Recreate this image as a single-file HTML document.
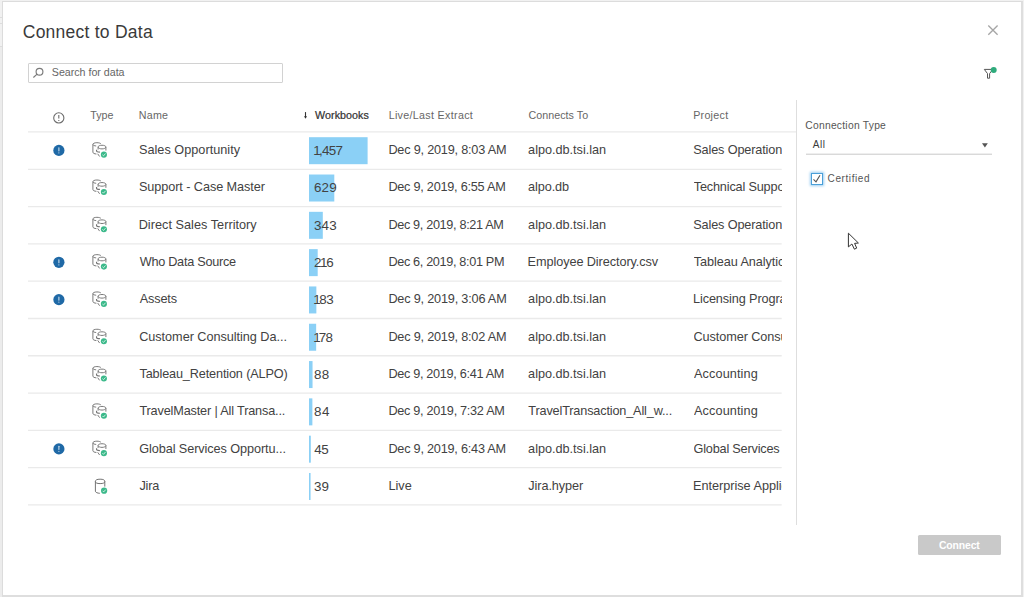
<!DOCTYPE html>
<html><head><meta charset="utf-8"><title>Connect to Data</title>
<style>
html,body{margin:0;padding:0}
body{width:1024px;height:597px;overflow:hidden;background:#f1f1f1;position:relative;font-family:"Liberation Sans", sans-serif}
#dlg{position:absolute;left:2px;top:1px;width:1018px;height:593px;background:#fff;border-left:1px solid #dcdcdc;border-top:1px solid #dcdcdc;border-right:2px solid #dedede;border-bottom:2px solid #dedede;box-sizing:content-box}
.t{position:absolute;white-space:pre;font-family:"Liberation Sans", sans-serif;line-height:20px}
.t i{font-style:normal;margin:0 -1.3px}
#ov{position:absolute;left:0;top:0}
#search{position:absolute;left:28px;top:63px;width:253px;height:18px;border:1px solid #d2d2d2;border-radius:1px;background:#fff}
#btn{position:absolute;left:918px;top:535px;width:83px;height:20px;background:#c9c9c9;border-radius:1.5px}
#cb{position:absolute;left:811px;top:173px;width:10px;height:10px;border:1px solid #4a9fd8;background:#fff;box-shadow:0 0 2.5px 1px #9bcdf0}
</style></head><body>
<div style="position:absolute;left:0;top:17px;width:2px;height:1px;background:#ddd"></div>
<div style="position:absolute;left:0;top:23px;width:2px;height:1px;background:#ddd"></div>
<div style="position:absolute;left:0;top:46px;width:2px;height:551px;background:#ececec"></div><div style="position:absolute;left:0;top:46px;width:2px;height:1px;background:#ddd"></div>
<div id="dlg"></div>
<div id="search"></div>
<div id="cb"></div>
<div id="btn"></div>
<svg id="ov" width="1024" height="597" viewBox="0 0 1024 597">
<g stroke="#eaeaea" stroke-width="1.33">
<line x1="28" x2="796.5" y1="131.8" y2="131.8"/>
<line x1="28" x2="781.7" y1="169.30" y2="169.30"/>
<line x1="28" x2="781.7" y1="206.59" y2="206.59"/>
<line x1="28" x2="781.7" y1="243.88" y2="243.88"/>
<line x1="28" x2="781.7" y1="281.17" y2="281.17"/>
<line x1="28" x2="781.7" y1="318.46" y2="318.46"/>
<line x1="28" x2="781.7" y1="355.75" y2="355.75"/>
<line x1="28" x2="781.7" y1="393.04" y2="393.04"/>
<line x1="28" x2="781.7" y1="430.33" y2="430.33"/>
<line x1="28" x2="781.7" y1="467.62" y2="467.62"/>
<line x1="28" x2="781.7" y1="504.91" y2="504.91"/>
</g>
<line x1="796.5" x2="796.5" y1="100" y2="525" stroke="#dedede" stroke-width="1"/>
<g fill="#8bd0f6">
<rect x="309" y="137.20" width="58.60" height="27"/>
<rect x="309" y="174.51" width="25.30" height="27"/>
<rect x="309" y="211.82" width="13.80" height="27"/>
<rect x="309" y="249.13" width="8.69" height="27"/>
<rect x="309" y="286.44" width="7.36" height="27"/>
<rect x="309" y="323.75" width="7.16" height="27"/>
<rect x="309" y="361.06" width="3.54" height="27"/>
<rect x="309" y="398.37" width="3.38" height="27"/>
<rect x="309" y="435.68" width="1.81" height="27"/>
<rect x="309" y="472.99" width="1.57" height="27"/>
</g>
<g transform="translate(58.9,150.40)"><circle r="5.6" fill="#1f69a6"/><rect x="-0.5" y="-3.1" width="1.0" height="4.1" rx=".4" fill="#dbe8f3"/><rect x="-0.5" y="1.9" width="1.0" height="1.2" rx=".4" fill="#dbe8f3"/></g>
<g transform="translate(58.9,262.33)"><circle r="5.6" fill="#1f69a6"/><rect x="-0.5" y="-3.1" width="1.0" height="4.1" rx=".4" fill="#dbe8f3"/><rect x="-0.5" y="1.9" width="1.0" height="1.2" rx=".4" fill="#dbe8f3"/></g>
<g transform="translate(58.9,299.64)"><circle r="5.6" fill="#1f69a6"/><rect x="-0.5" y="-3.1" width="1.0" height="4.1" rx=".4" fill="#dbe8f3"/><rect x="-0.5" y="1.9" width="1.0" height="1.2" rx=".4" fill="#dbe8f3"/></g>
<g transform="translate(58.9,448.88)"><circle r="5.6" fill="#1f69a6"/><rect x="-0.5" y="-3.1" width="1.0" height="4.1" rx=".4" fill="#dbe8f3"/><rect x="-0.5" y="1.9" width="1.0" height="1.2" rx=".4" fill="#dbe8f3"/></g>
<g transform="translate(90,140.30)" fill="none" stroke="#737373" stroke-width="0.95">
<path d="M10.9 3.5 C10.3 2.8 8.8 2.4 6.9 2.4 C4.6 2.4 2.9 3.1 2.9 4.1 V11.9 C2.9 12.9 4.4 13.6 6.4 13.7"/>
<path d="M2.9 4.3 C3.3 5.1 4.6 5.6 6.2 5.65"/>
<path d="M8.1 9.2 V6.6 C8.1 5.7 9.8 4.95 12.0 4.95 C14.2 4.95 15.9 5.7 15.9 6.6 V10.2"/>
<path d="M8.1 6.9 C8.5 7.9 10.0 8.6 12.0 8.6 C14.0 8.6 15.5 7.9 15.9 6.9"/>
<path d="M6.55 9.4 V10.7 C6.7 11.4 8.0 11.8 9.9 11.8" stroke-width="1.15"/>
<path d="M7.7 13.5 L9.6 16.2" />
<circle cx="13.9" cy="14.35" r="3.05" fill="#3bb98a" stroke="none"/>
<path d="M12.4 14.45 L13.5 15.55 L15.5 13.25" stroke="#e4f5ee" stroke-width="0.85"/>
</g>
<g transform="translate(90,177.61)" fill="none" stroke="#737373" stroke-width="0.95">
<path d="M10.9 3.5 C10.3 2.8 8.8 2.4 6.9 2.4 C4.6 2.4 2.9 3.1 2.9 4.1 V11.9 C2.9 12.9 4.4 13.6 6.4 13.7"/>
<path d="M2.9 4.3 C3.3 5.1 4.6 5.6 6.2 5.65"/>
<path d="M8.1 9.2 V6.6 C8.1 5.7 9.8 4.95 12.0 4.95 C14.2 4.95 15.9 5.7 15.9 6.6 V10.2"/>
<path d="M8.1 6.9 C8.5 7.9 10.0 8.6 12.0 8.6 C14.0 8.6 15.5 7.9 15.9 6.9"/>
<path d="M6.55 9.4 V10.7 C6.7 11.4 8.0 11.8 9.9 11.8" stroke-width="1.15"/>
<path d="M7.7 13.5 L9.6 16.2" />
<circle cx="13.9" cy="14.35" r="3.05" fill="#3bb98a" stroke="none"/>
<path d="M12.4 14.45 L13.5 15.55 L15.5 13.25" stroke="#e4f5ee" stroke-width="0.85"/>
</g>
<g transform="translate(90,214.92)" fill="none" stroke="#737373" stroke-width="0.95">
<path d="M10.9 3.5 C10.3 2.8 8.8 2.4 6.9 2.4 C4.6 2.4 2.9 3.1 2.9 4.1 V11.9 C2.9 12.9 4.4 13.6 6.4 13.7"/>
<path d="M2.9 4.3 C3.3 5.1 4.6 5.6 6.2 5.65"/>
<path d="M8.1 9.2 V6.6 C8.1 5.7 9.8 4.95 12.0 4.95 C14.2 4.95 15.9 5.7 15.9 6.6 V10.2"/>
<path d="M8.1 6.9 C8.5 7.9 10.0 8.6 12.0 8.6 C14.0 8.6 15.5 7.9 15.9 6.9"/>
<path d="M6.55 9.4 V10.7 C6.7 11.4 8.0 11.8 9.9 11.8" stroke-width="1.15"/>
<path d="M7.7 13.5 L9.6 16.2" />
<circle cx="13.9" cy="14.35" r="3.05" fill="#3bb98a" stroke="none"/>
<path d="M12.4 14.45 L13.5 15.55 L15.5 13.25" stroke="#e4f5ee" stroke-width="0.85"/>
</g>
<g transform="translate(90,252.23)" fill="none" stroke="#737373" stroke-width="0.95">
<path d="M10.9 3.5 C10.3 2.8 8.8 2.4 6.9 2.4 C4.6 2.4 2.9 3.1 2.9 4.1 V11.9 C2.9 12.9 4.4 13.6 6.4 13.7"/>
<path d="M2.9 4.3 C3.3 5.1 4.6 5.6 6.2 5.65"/>
<path d="M8.1 9.2 V6.6 C8.1 5.7 9.8 4.95 12.0 4.95 C14.2 4.95 15.9 5.7 15.9 6.6 V10.2"/>
<path d="M8.1 6.9 C8.5 7.9 10.0 8.6 12.0 8.6 C14.0 8.6 15.5 7.9 15.9 6.9"/>
<path d="M6.55 9.4 V10.7 C6.7 11.4 8.0 11.8 9.9 11.8" stroke-width="1.15"/>
<path d="M7.7 13.5 L9.6 16.2" />
<circle cx="13.9" cy="14.35" r="3.05" fill="#3bb98a" stroke="none"/>
<path d="M12.4 14.45 L13.5 15.55 L15.5 13.25" stroke="#e4f5ee" stroke-width="0.85"/>
</g>
<g transform="translate(90,289.54)" fill="none" stroke="#737373" stroke-width="0.95">
<path d="M10.9 3.5 C10.3 2.8 8.8 2.4 6.9 2.4 C4.6 2.4 2.9 3.1 2.9 4.1 V11.9 C2.9 12.9 4.4 13.6 6.4 13.7"/>
<path d="M2.9 4.3 C3.3 5.1 4.6 5.6 6.2 5.65"/>
<path d="M8.1 9.2 V6.6 C8.1 5.7 9.8 4.95 12.0 4.95 C14.2 4.95 15.9 5.7 15.9 6.6 V10.2"/>
<path d="M8.1 6.9 C8.5 7.9 10.0 8.6 12.0 8.6 C14.0 8.6 15.5 7.9 15.9 6.9"/>
<path d="M6.55 9.4 V10.7 C6.7 11.4 8.0 11.8 9.9 11.8" stroke-width="1.15"/>
<path d="M7.7 13.5 L9.6 16.2" />
<circle cx="13.9" cy="14.35" r="3.05" fill="#3bb98a" stroke="none"/>
<path d="M12.4 14.45 L13.5 15.55 L15.5 13.25" stroke="#e4f5ee" stroke-width="0.85"/>
</g>
<g transform="translate(90,326.85)" fill="none" stroke="#737373" stroke-width="0.95">
<path d="M10.9 3.5 C10.3 2.8 8.8 2.4 6.9 2.4 C4.6 2.4 2.9 3.1 2.9 4.1 V11.9 C2.9 12.9 4.4 13.6 6.4 13.7"/>
<path d="M2.9 4.3 C3.3 5.1 4.6 5.6 6.2 5.65"/>
<path d="M8.1 9.2 V6.6 C8.1 5.7 9.8 4.95 12.0 4.95 C14.2 4.95 15.9 5.7 15.9 6.6 V10.2"/>
<path d="M8.1 6.9 C8.5 7.9 10.0 8.6 12.0 8.6 C14.0 8.6 15.5 7.9 15.9 6.9"/>
<path d="M6.55 9.4 V10.7 C6.7 11.4 8.0 11.8 9.9 11.8" stroke-width="1.15"/>
<path d="M7.7 13.5 L9.6 16.2" />
<circle cx="13.9" cy="14.35" r="3.05" fill="#3bb98a" stroke="none"/>
<path d="M12.4 14.45 L13.5 15.55 L15.5 13.25" stroke="#e4f5ee" stroke-width="0.85"/>
</g>
<g transform="translate(90,364.16)" fill="none" stroke="#737373" stroke-width="0.95">
<path d="M10.9 3.5 C10.3 2.8 8.8 2.4 6.9 2.4 C4.6 2.4 2.9 3.1 2.9 4.1 V11.9 C2.9 12.9 4.4 13.6 6.4 13.7"/>
<path d="M2.9 4.3 C3.3 5.1 4.6 5.6 6.2 5.65"/>
<path d="M8.1 9.2 V6.6 C8.1 5.7 9.8 4.95 12.0 4.95 C14.2 4.95 15.9 5.7 15.9 6.6 V10.2"/>
<path d="M8.1 6.9 C8.5 7.9 10.0 8.6 12.0 8.6 C14.0 8.6 15.5 7.9 15.9 6.9"/>
<path d="M6.55 9.4 V10.7 C6.7 11.4 8.0 11.8 9.9 11.8" stroke-width="1.15"/>
<path d="M7.7 13.5 L9.6 16.2" />
<circle cx="13.9" cy="14.35" r="3.05" fill="#3bb98a" stroke="none"/>
<path d="M12.4 14.45 L13.5 15.55 L15.5 13.25" stroke="#e4f5ee" stroke-width="0.85"/>
</g>
<g transform="translate(90,401.47)" fill="none" stroke="#737373" stroke-width="0.95">
<path d="M10.9 3.5 C10.3 2.8 8.8 2.4 6.9 2.4 C4.6 2.4 2.9 3.1 2.9 4.1 V11.9 C2.9 12.9 4.4 13.6 6.4 13.7"/>
<path d="M2.9 4.3 C3.3 5.1 4.6 5.6 6.2 5.65"/>
<path d="M8.1 9.2 V6.6 C8.1 5.7 9.8 4.95 12.0 4.95 C14.2 4.95 15.9 5.7 15.9 6.6 V10.2"/>
<path d="M8.1 6.9 C8.5 7.9 10.0 8.6 12.0 8.6 C14.0 8.6 15.5 7.9 15.9 6.9"/>
<path d="M6.55 9.4 V10.7 C6.7 11.4 8.0 11.8 9.9 11.8" stroke-width="1.15"/>
<path d="M7.7 13.5 L9.6 16.2" />
<circle cx="13.9" cy="14.35" r="3.05" fill="#3bb98a" stroke="none"/>
<path d="M12.4 14.45 L13.5 15.55 L15.5 13.25" stroke="#e4f5ee" stroke-width="0.85"/>
</g>
<g transform="translate(90,438.78)" fill="none" stroke="#737373" stroke-width="0.95">
<path d="M10.9 3.5 C10.3 2.8 8.8 2.4 6.9 2.4 C4.6 2.4 2.9 3.1 2.9 4.1 V11.9 C2.9 12.9 4.4 13.6 6.4 13.7"/>
<path d="M2.9 4.3 C3.3 5.1 4.6 5.6 6.2 5.65"/>
<path d="M8.1 9.2 V6.6 C8.1 5.7 9.8 4.95 12.0 4.95 C14.2 4.95 15.9 5.7 15.9 6.6 V10.2"/>
<path d="M8.1 6.9 C8.5 7.9 10.0 8.6 12.0 8.6 C14.0 8.6 15.5 7.9 15.9 6.9"/>
<path d="M6.55 9.4 V10.7 C6.7 11.4 8.0 11.8 9.9 11.8" stroke-width="1.15"/>
<path d="M7.7 13.5 L9.6 16.2" />
<circle cx="13.9" cy="14.35" r="3.05" fill="#3bb98a" stroke="none"/>
<path d="M12.4 14.45 L13.5 15.55 L15.5 13.25" stroke="#e4f5ee" stroke-width="0.85"/>
</g>
<g transform="translate(90,476.00)" fill="none" stroke="#6c6c6c" stroke-width="0.95">
<ellipse cx="10.1" cy="5.4" rx="4.7" ry="2.2"/>
<path d="M5.4 5.4 V15.3 C5.6 16.4 7.4 17.2 9.8 17.3"/>
<path d="M14.8 5.4 V10.6"/>
<circle cx="14.1" cy="14.7" r="3.1" fill="#3bb98a" stroke="none"/>
<path d="M12.6 14.8 L13.7 15.9 L15.7 13.6" stroke="#e4f5ee" stroke-width="0.85"/>
</g>
<g transform="translate(32,66)" fill="none" stroke="#7a7a7a" stroke-width="1.15"><circle cx="7.5" cy="5.7" r="3.4"/><path d="M5.1 8.1 L1.4 11.5"/></g>
<g transform="translate(52,111)" fill="none" stroke="#6c6c6c" stroke-width="1.1"><circle cx="6.8" cy="6.9" r="5.1"/><path d="M6.8 4.1 V7.6"/><path d="M6.8 8.9 V10"/></g>
<g transform="translate(301,110)"><path d="M4.5 2.1 V7.4" fill="none" stroke="#333" stroke-width="1.1"/><path d="M3.0 6.3 H6.0 L4.5 8.7 Z" fill="#333"/></g>
<line x1="806" x2="992" y1="154.2" y2="154.2" stroke="#c9c9c9" stroke-width="1"/>
<path d="M982 143.2 H987.8 L984.9 147.4 Z" fill="#555"/>
<path d="M813.5 179.4 L816 181.8 L820 175.3" fill="none" stroke="#555" stroke-width="1.1"/>
<path d="M848.4 233.2 V246.9 L851.9 244.0 L854.4 249.2 L856.7 248.1 L854.6 243.4 L858.4 243.0 Z" fill="#fff" stroke="#333" stroke-width="1" stroke-linejoin="miter"/>
<path d="M988.3 25.5 L997.6 34.8 M997.6 25.5 L988.3 34.8" fill="none" stroke="#a6a6a6" stroke-width="1.35"/>
<g transform="translate(980,64)" fill="none" stroke="#555" stroke-width="1"><path d="M4.3 5.4 H12.8 L9.6 9.6 V14.2 H7.5 V9.6 Z"/><circle cx="13.7" cy="5.9" r="3" fill="#2fab7c" stroke="none"/></g>
</svg>
<span class="t" style="left:22.75px;top:22px;font-size:17.5px;color:#3a3a3a;letter-spacing:0.246px;">Connect to Data</span>
<span class="t" style="left:51.80px;top:62px;font-size:10.7px;color:#666;letter-spacing:-0.025px;">Search for data</span>
<span class="t" style="left:90.25px;top:105px;font-size:10.7px;color:#666;letter-spacing:0.000px;">Type</span>
<span class="t" style="left:138.75px;top:105px;font-size:10.7px;color:#666;letter-spacing:0.233px;">Name</span>
<span class="t" style="left:315.10px;top:105px;font-size:10.7px;color:#333;letter-spacing:0.050px;-webkit-text-stroke:0.22px #333;">Workbooks</span>
<span class="t" style="left:388.65px;top:105px;font-size:10.7px;color:#666;letter-spacing:0.322px;">Live/Last Extract</span>
<span class="t" style="left:528.40px;top:105px;font-size:10.7px;color:#666;letter-spacing:0.060px;">Connects To</span>
<span class="t" style="left:693.15px;top:105px;font-size:10.7px;color:#666;letter-spacing:0.283px;">Project</span>
<span class="t" style="left:138.95px;top:140px;font-size:12.7px;color:#424242;letter-spacing:0.019px;">Sales Opportunity</span>
<span class="t" style="left:314.65px;top:141px;font-size:13.4px;color:#424242;letter-spacing:-0.625px;"><i>1</i>,457</span>
<span class="t" style="left:388.40px;top:140px;font-size:12.7px;color:#424242;letter-spacing:-0.205px;">Dec 9, 2019, 8:03 AM</span>
<span class="t" style="left:528.10px;top:140px;font-size:12.7px;color:#424242;letter-spacing:-0.021px;">alpo.db.tsi.lan</span>
<span class="t" style="left:693.25px;top:140px;font-size:12.7px;color:#424242;letter-spacing:-0.143px;width:88.25px;overflow:hidden;">Sales Operations</span>
<span class="t" style="left:138.95px;top:177px;font-size:12.7px;color:#424242;letter-spacing:-0.082px;">Support - Case Master</span>
<span class="t" style="left:313.90px;top:178px;font-size:13.4px;color:#424242;letter-spacing:0.175px;">629</span>
<span class="t" style="left:388.40px;top:177px;font-size:12.7px;color:#424242;letter-spacing:-0.247px;">Dec 9, 2019, 6:55 AM</span>
<span class="t" style="left:528.10px;top:177px;font-size:12.7px;color:#424242;letter-spacing:-0.108px;">alpo.db</span>
<span class="t" style="left:693.75px;top:177px;font-size:12.7px;color:#424242;letter-spacing:-0.173px;width:87.75px;overflow:hidden;">Technical Support</span>
<span class="t" style="left:138.70px;top:215px;font-size:12.7px;color:#424242;letter-spacing:0.024px;">Direct Sales Territory</span>
<span class="t" style="left:313.90px;top:216px;font-size:13.4px;color:#424242;letter-spacing:0.175px;">343</span>
<span class="t" style="left:388.40px;top:215px;font-size:12.7px;color:#424242;letter-spacing:-0.342px;">Dec 9, 2019, 8:21 AM</span>
<span class="t" style="left:528.10px;top:215px;font-size:12.7px;color:#424242;letter-spacing:-0.021px;">alpo.db.tsi.lan</span>
<span class="t" style="left:693.25px;top:215px;font-size:12.7px;color:#424242;letter-spacing:-0.143px;width:88.25px;overflow:hidden;">Sales Operations</span>
<span class="t" style="left:139.70px;top:252px;font-size:12.7px;color:#424242;letter-spacing:-0.271px;">Who Data Source</span>
<span class="t" style="left:313.90px;top:253px;font-size:13.4px;color:#424242;letter-spacing:0.025px;">2<i>1</i>6</span>
<span class="t" style="left:388.40px;top:252px;font-size:12.7px;color:#424242;letter-spacing:-0.350px;">Dec 6, 2019, 8:01 PM</span>
<span class="t" style="left:527.60px;top:252px;font-size:12.7px;color:#424242;letter-spacing:-0.083px;">Employee Directory.csv</span>
<span class="t" style="left:693.75px;top:252px;font-size:12.7px;color:#424242;letter-spacing:-0.075px;width:87.75px;overflow:hidden;">Tableau Analytics</span>
<span class="t" style="left:139.70px;top:289px;font-size:12.7px;color:#424242;letter-spacing:-0.150px;">Assets</span>
<span class="t" style="left:314.65px;top:290px;font-size:13.4px;color:#424242;letter-spacing:-0.350px;"><i>1</i>83</span>
<span class="t" style="left:388.40px;top:289px;font-size:12.7px;color:#424242;letter-spacing:-0.195px;">Dec 9, 2019, 3:06 AM</span>
<span class="t" style="left:528.10px;top:289px;font-size:12.7px;color:#424242;letter-spacing:-0.021px;">alpo.db.tsi.lan</span>
<span class="t" style="left:693.00px;top:289px;font-size:12.7px;color:#424242;letter-spacing:-0.107px;width:88.50px;overflow:hidden;">Licensing Program</span>
<span class="t" style="left:139.20px;top:327px;font-size:12.7px;color:#424242;letter-spacing:-0.044px;">Customer Consulting Da...</span>
<span class="t" style="left:314.65px;top:328px;font-size:13.4px;color:#424242;letter-spacing:-0.750px;"><i>1</i>78</span>
<span class="t" style="left:388.40px;top:327px;font-size:12.7px;color:#424242;letter-spacing:-0.205px;">Dec 9, 2019, 8:02 AM</span>
<span class="t" style="left:528.10px;top:327px;font-size:12.7px;color:#424242;letter-spacing:-0.021px;">alpo.db.tsi.lan</span>
<span class="t" style="left:693.50px;top:327px;font-size:12.7px;color:#424242;letter-spacing:-0.087px;width:88.00px;overflow:hidden;">Customer Consulting</span>
<span class="t" style="left:139.45px;top:364px;font-size:12.7px;color:#424242;letter-spacing:-0.146px;">Tableau_Retention (ALPO)</span>
<span class="t" style="left:313.90px;top:365px;font-size:13.4px;color:#424242;letter-spacing:0.450px;">88</span>
<span class="t" style="left:388.40px;top:364px;font-size:12.7px;color:#424242;letter-spacing:-0.316px;">Dec 9, 2019, 6:41 AM</span>
<span class="t" style="left:528.10px;top:364px;font-size:12.7px;color:#424242;letter-spacing:-0.021px;">alpo.db.tsi.lan</span>
<span class="t" style="left:694.00px;top:364px;font-size:12.7px;color:#424242;letter-spacing:0.111px;width:87.50px;overflow:hidden;">Accounting</span>
<span class="t" style="left:139.45px;top:401px;font-size:12.7px;color:#424242;letter-spacing:-0.159px;">TravelMaster | All Transa...</span>
<span class="t" style="left:313.90px;top:402px;font-size:13.4px;color:#424242;letter-spacing:0.600px;">84</span>
<span class="t" style="left:388.40px;top:401px;font-size:12.7px;color:#424242;letter-spacing:-0.289px;">Dec 9, 2019, 7:32 AM</span>
<span class="t" style="left:528.35px;top:401px;font-size:12.7px;color:#424242;letter-spacing:-0.160px;">TravelTransaction_All_w...</span>
<span class="t" style="left:694.00px;top:401px;font-size:12.7px;color:#424242;letter-spacing:0.111px;width:87.50px;overflow:hidden;">Accounting</span>
<span class="t" style="left:139.20px;top:439px;font-size:12.7px;color:#424242;letter-spacing:-0.082px;">Global Services Opportu...</span>
<span class="t" style="left:314.15px;top:440px;font-size:13.4px;color:#424242;letter-spacing:-0.250px;">45</span>
<span class="t" style="left:388.40px;top:439px;font-size:12.7px;color:#424242;letter-spacing:-0.226px;">Dec 9, 2019, 6:43 AM</span>
<span class="t" style="left:528.10px;top:439px;font-size:12.7px;color:#424242;letter-spacing:-0.021px;">alpo.db.tsi.lan</span>
<span class="t" style="left:693.50px;top:439px;font-size:12.7px;color:#424242;letter-spacing:-0.193px;width:88.00px;overflow:hidden;">Global Services</span>
<span class="t" style="left:139.45px;top:476px;font-size:12.7px;color:#424242;letter-spacing:-0.183px;">Jira</span>
<span class="t" style="left:313.90px;top:477px;font-size:13.4px;color:#424242;letter-spacing:0.250px;">39</span>
<span class="t" style="left:388.40px;top:476px;font-size:12.7px;color:#424242;letter-spacing:0.017px;">Live</span>
<span class="t" style="left:528.35px;top:476px;font-size:12.7px;color:#424242;letter-spacing:-0.094px;">Jira.hyper</span>
<span class="t" style="left:693.00px;top:476px;font-size:12.7px;color:#424242;letter-spacing:-0.017px;width:88.50px;overflow:hidden;">Enterprise Applications</span>
<span class="t" style="left:805.30px;top:116px;font-size:10.3px;color:#555;letter-spacing:0.246px;">Connection Type</span>
<span class="t" style="left:812.80px;top:135px;font-size:10.0px;color:#3a3a3a;letter-spacing:0.475px;">All</span>
<span class="t" style="left:827.60px;top:169px;font-size:10.0px;color:#555;letter-spacing:0.594px;">Certified</span>
<span class="t" style="left:938.95px;top:536px;font-size:10.4px;color:#fff;letter-spacing:-0.125px;font-weight:bold;">Connect</span>
</body></html>
